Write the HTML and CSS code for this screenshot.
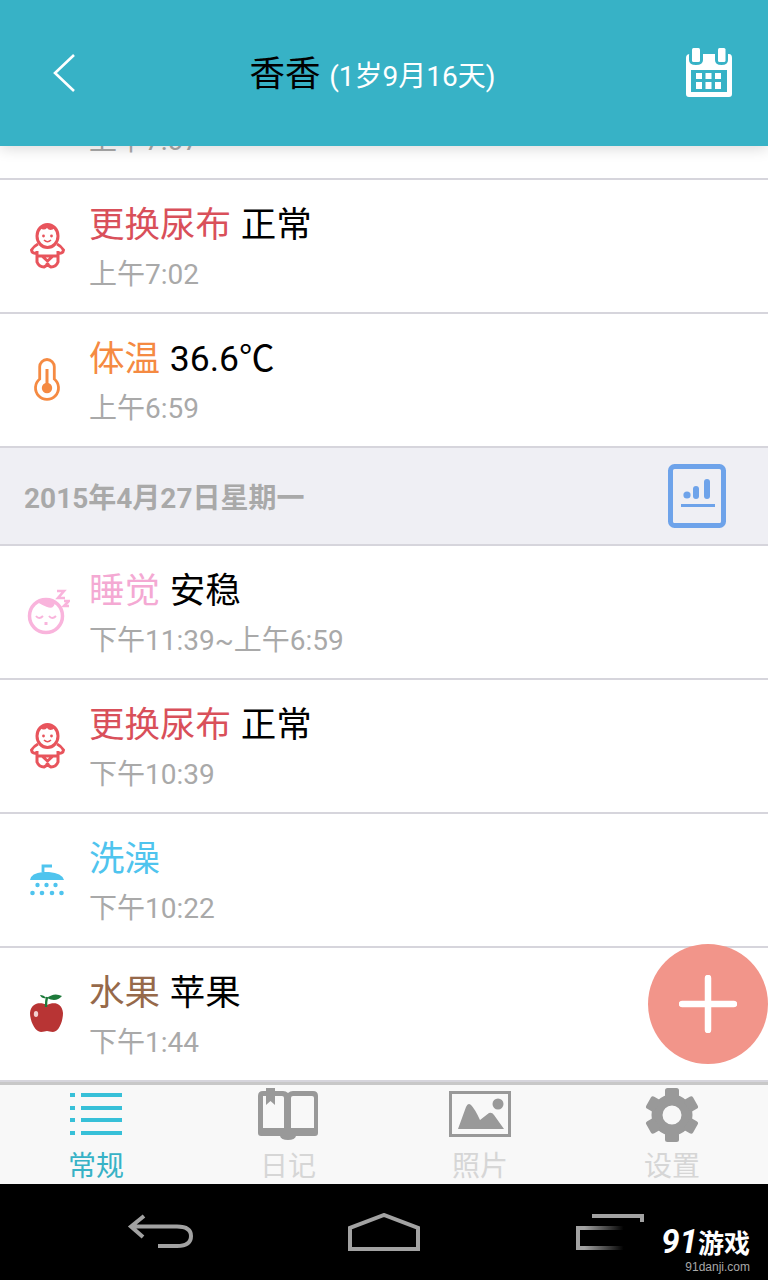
FILE: index.html
```html
<!DOCTYPE html>
<html>
<head>
  <meta name="viewport" content="width=device-width, initial-scale=1">
  <link rel="stylesheet" href="styles.css">
  <title>香香</title>
</head>
<body>

<div class="screen">
  <div class="topBar">
    <svg class="backIcon" viewBox="0 0 24 40" width="24" height="40"><path d="M22 2 L3 20 L22 38" fill="none" stroke="#fff" stroke-width="2.6"/></svg>
    <div class="topTitle">香香 <span class="topAge">(1岁9月16天)</span></div>
    <svg class="calendarIcon" viewBox="0 0 48 49" width="48" height="49">
      <path d="M5 6 H4 V12 Q4 17 11 17 Q18 17 18 12 V6 H30 V12 Q30 17 36.500 17 Q43 17 43 12 V6 H44 Q47 6 47 10 V46 Q47 49 44 49 H4 Q1 49 1 46 V10 Q1 6 5 6 Z" fill="#fff"/>
      <rect x="7" y="0" width="8" height="14" rx="1.500" fill="#fff"/>
      <rect x="33" y="0" width="7.500" height="14" rx="1.500" fill="#fff"/>
      <rect x="6" y="22" width="36" height="22" fill="#37b2c6"/>
      <g fill="#fff">
        <rect x="11" y="25" width="6" height="6"/><rect x="20.500" y="25" width="6" height="6"/><rect x="30" y="25" width="6" height="6"/>
        <rect x="11" y="34" width="6" height="7"/><rect x="20.500" y="34" width="6" height="7"/><rect x="30" y="34" width="6" height="7"/>
      </g>
    </svg>
  </div>

  <div class="listWrap">
    <div class="list">
      <div class="row">
        <div class="rowIcon"></div>
        <div class="rowText">
          <div class="rowTitle"><span class="red">更换尿布</span> 正常</div>
          <div class="rowTime">上午7:07</div>
        </div>
      </div>

      <div class="row">
        <div class="rowIcon">
          <svg viewBox="0 0 36 46" width="36" height="46"><use href="#baby"/></svg>
        </div>
        <div class="rowText">
          <div class="rowTitle"><span class="red">更换尿布</span> 正常</div>
          <div class="rowTime">上午7:02</div>
        </div>
      </div>

      <div class="row">
        <div class="rowIcon">
          <svg viewBox="0 0 28 44" width="28" height="44">
            <path d="M6.700 21 V8.800 A7.300 7.300 0 0 1 21.300 8.800 V21 A11.500 11.500 0 1 1 6.700 21 Z" fill="none" stroke="#f58a42" stroke-width="2.800"/>
            <rect x="12.500" y="11" width="3" height="18" fill="#f58a42"/>
            <circle cx="14" cy="30" r="5.200" fill="#f58a42"/>
          </svg>
        </div>
        <div class="rowText">
          <div class="rowTitle"><span class="orange">体温</span> 36.6℃</div>
          <div class="rowTime">上午6:59</div>
        </div>
      </div>

      <div class="dayRow">
        <div class="dayLabel">2015年4月27日星期一</div>
        <svg class="chartIcon" viewBox="0 0 58 64" width="58" height="64">
          <rect x="2.500" y="2.500" width="53" height="59" rx="4" fill="none" stroke="#6ea3ea" stroke-width="5"/>
          <circle cx="19" cy="31" r="3.600" fill="#6ea3ea"/>
          <rect x="25" y="22" width="6" height="13" rx="3" fill="#6ea3ea"/>
          <rect x="36" y="15" width="6" height="20" rx="3" fill="#6ea3ea"/>
          <rect x="13" y="40" width="34" height="3" fill="#6ea3ea"/>
        </svg>
      </div>

      <div class="row">
        <div class="rowIcon">
          <svg viewBox="0 0 46 46" width="46" height="46">
            <circle cx="22" cy="27" r="16.500" fill="none" stroke="#f9b4dc" stroke-width="3.500"/>
            <path d="M13 13 Q22 9 31 13 Q30 21 23 18 Q18 16 13 13 Z" fill="#f9b4dc"/>
            <path d="M12 27 Q15 31 19 27 M25 27 Q28 31 32 27" fill="none" stroke="#f9b4dc" stroke-width="2"/>
            <path d="M20.500 33 H23.500 V36 H20.500 Z" fill="#f9b4dc"/>
            <path d="M33 2 H40 L34 9 H41 M40 12 H45 L40 17 H45" fill="none" stroke="#f9b4dc" stroke-width="2.600"/>
          </svg>
        </div>
        <div class="rowText">
          <div class="rowTitle"><span class="pink">睡觉</span> 安稳</div>
          <div class="rowTime">下午11:39~上午6:59</div>
        </div>
      </div>

      <div class="row">
        <div class="rowIcon">
          <svg viewBox="0 0 36 46" width="36" height="46"><use href="#baby"/></svg>
        </div>
        <div class="rowText">
          <div class="rowTitle"><span class="red">更换尿布</span> 正常</div>
          <div class="rowTime">下午10:39</div>
        </div>
      </div>

      <div class="row">
        <div class="rowIcon">
          <svg viewBox="0 0 36 34" width="36" height="34">
            <path d="M14 9 V3 H23" fill="none" stroke="#4fc4ee" stroke-width="2.800"/>
            <path d="M1 17 Q2 10 14 9 H20 Q33 10 35 17 Z" fill="#4fc4ee"/>
            <g fill="#4fc4ee">
              <circle cx="8.500" cy="22" r="2.200"/><circle cx="17.500" cy="22" r="2.200"/><circle cx="26.500" cy="22" r="2.200"/>
              <circle cx="3.500" cy="30" r="2.300"/><circle cx="13" cy="30" r="2.300"/><circle cx="23" cy="30" r="2.300"/><circle cx="32.500" cy="30" r="2.300"/>
            </g>
          </svg>
        </div>
        <div class="rowText">
          <div class="rowTitle"><span class="blue">洗澡</span></div>
          <div class="rowTime">下午10:22</div>
        </div>
      </div>

      <div class="row">
        <div class="rowIcon">
          <svg viewBox="0 0 36 42" width="36" height="42">
            <path d="M18 12 C12 9 2 9 1 20 C1 28 6 39 12 39 C15 39 16 38 18 38 C20 38 21 39 24 39 C30 39 34 28 34 20 C33 9 24 9 18 12 Z" fill="#b83434"/>
            <path d="M17 14 Q17 8 18 4" fill="none" stroke="#1d7a3a" stroke-width="2.400"/>
            <path d="M18 5 Q25 -1 33 3 Q27 10 18 5 Z" fill="#1d7a3a"/>
            <path d="M11 2 Q15 2 17 5 Q13 6 11 2 Z" fill="#1d7a3a"/>
            <ellipse cx="7" cy="21" rx="2.200" ry="3" fill="#f2d0d0"/>
          </svg>
        </div>
        <div class="rowText">
          <div class="rowTitle"><span class="brown">水果</span> 苹果</div>
          <div class="rowTime">下午1:44</div>
        </div>
      </div>
    </div>

    <div class="addBtn">
      <svg viewBox="0 0 58 58" width="58" height="58"><path d="M29 3 V55 M3 29 H55" stroke="#fff" stroke-width="6.500" stroke-linecap="round"/></svg>
    </div>
  </div>

  <div class="tabBar">
    <div class="tab tabActive">
      <svg viewBox="0 0 52 54" width="52" height="54">
        <g fill="#37c0d8">
          <rect x="0" y="5" width="5" height="4"/><rect x="11" y="5" width="41" height="4"/>
          <rect x="0" y="18" width="5" height="4"/><rect x="11" y="18" width="41" height="4"/>
          <rect x="0" y="30" width="5" height="4"/><rect x="11" y="30" width="41" height="4"/>
          <rect x="0" y="43" width="5" height="4"/><rect x="11" y="43" width="41" height="4"/>
        </g>
      </svg>
      <span>常规</span>
    </div>
    <div class="tab">
      <svg viewBox="0 0 62 54" width="62" height="54">
        <path d="M6 3 H26 Q29 3 31 5 Q33 3 36 3 H56 Q61 3 61 8 V45 Q61 48 58 48 H39 Q38 52 31 52 Q24 52 23 48 H4 Q1 48 1 45 V8 Q1 3 6 3 Z" fill="#999"/>
        <path d="M6 8 H25 Q27 8 27 10 V40 H6 Z" fill="#f8f8f8"/>
        <path d="M34 40 V10 Q34 8 36 8 H55 Q57 8 57 10 V40 Z" fill="#f8f8f8"/>
        <path d="M9 0 H18 V17 L13.500 13 L9 17 Z" fill="#999"/>
      </svg>
      <span>日记</span>
    </div>
    <div class="tab">
      <svg viewBox="0 0 62 54" width="62" height="54">
        <rect x="1.500" y="4.500" width="59" height="43" fill="none" stroke="#999" stroke-width="3"/>
        <circle cx="49" cy="16" r="5.500" fill="#999"/>
        <path d="M9 41 L17 19 Q19 14 22 17 Q26 21 31 32 L40 25 Q43 24 45 27 L55 41 Z" fill="#999"/>
      </svg>
      <span>照片</span>
    </div>
    <div class="tab">
      <svg viewBox="0 0 54 54" width="54" height="54">
        <circle cx="27" cy="27" r="15" fill="none" stroke="#999" stroke-width="11"/>
        <g fill="#999">
          <rect x="20" y="0" width="14" height="10" rx="2.500"/>
          <rect x="20" y="44" width="14" height="10" rx="2.500"/>
          <rect x="20" y="0" width="14" height="10" rx="2.500" transform="rotate(60 27 27)"/>
          <rect x="20" y="0" width="14" height="10" rx="2.500" transform="rotate(120 27 27)"/>
          <rect x="20" y="0" width="14" height="10" rx="2.500" transform="rotate(240 27 27)"/>
          <rect x="20" y="0" width="14" height="10" rx="2.500" transform="rotate(300 27 27)"/>
        </g>
      </svg>
      <span>设置</span>
    </div>
  </div>

  <div class="navBar">
    <svg viewBox="0 0 68 36" width="68" height="36"><path d="M17 2 L4 12.500 L16 23 M4 12.500 H50 Q64 12.500 64 22 Q64 32 50 32 H31" fill="none" stroke="#a2a2a2" stroke-width="4"/></svg>
    <svg class="homeIcon" viewBox="0 0 72 38" width="72" height="38"><path d="M2 36 V15 L36 2 L70 15 V36 Z" fill="none" stroke="#a2a2a2" stroke-width="4"/></svg>
    <svg viewBox="0 0 68 36" width="68" height="36">
      <defs>
        <linearGradient id="fade" x1="0" x2="1" y1="0" y2="0">
          <stop offset="0.150" stop-color="#a2a2a2"/><stop offset="0.850" stop-color="#a2a2a2" stop-opacity="0"/>
        </linearGradient>
      </defs>
      <path d="M16 2 H66 V8" fill="none" stroke="#a2a2a2" stroke-width="4"/>
      <rect x="0" y="12" width="56" height="24" fill="url(#fade)"/>
      <rect x="4" y="16" width="54" height="16" fill="#000"/>
    </svg>
    <div class="watermark">
      <div class="wmLogo"><span class="wmNum">91</span>游戏</div>
      <div class="wmSite">91danji.com</div>
    </div>
  </div>
</div>

<svg class="defs" width="0" height="0">
  <symbol id="baby" viewBox="0 0 36 46">
    <g fill="none" stroke="#e8545c" stroke-width="3">
      <ellipse cx="18.500" cy="13" rx="10.500" ry="11.500"/>
      <path d="M9 21 Q5 23 2.500 27 Q3 31 8 30 M28 21 Q32 23 34.500 27 Q34 31 29 30"/>
      <path d="M8 28 V39 Q10 44 15 44 Q18 43 18.500 40 Q19 43 22 44 Q27 44 29 39 V28"/>
      <path d="M8 33 H29 M13 33 L18.500 38 L24 33"/>
    </g>
    <path d="M11 5 Q18 -1 26 5 Q21 9 18 5 Q15 8 11 5 Z" fill="#e8545c"/>
    <circle cx="14.500" cy="13" r="1.400" fill="#e8545c"/>
    <circle cx="22.500" cy="13" r="1.400" fill="#e8545c"/>
    <path d="M15 17 Q18.500 20.500 22 17" fill="none" stroke="#e8545c" stroke-width="1.600"/>
  </symbol>
</svg>

</body>
</html>
```
FILE: styles.css
```css
html, body {
  margin: 0;
  height: 100%;
}

body {
  font-family: Roboto, "Noto Sans CJK SC", sans-serif;
}

.defs {
  position: absolute;
}

.screen {
  width: 768px;
  height: 1280px;
  display: flex;
  flex-direction: column;
  overflow: hidden;
  background-color: #fff;
}

.topBar {
  position: relative;
  z-index: 2;
  height: 146px;
  flex: none;
  box-sizing: border-box;
  padding: 0 35px 0 52px;
  display: flex;
  align-items: center;
  justify-content: space-between;
  background-color: #37b2c6;
  box-shadow: 0 2px 14px rgba(0, 0, 0, 0.16);
}

.backIcon {
  margin-top: -1px;
}

.calendarIcon {
  margin-top: -1px;
}

.topTitle {
  margin-right: 16px;
  margin-top: 5px;
  line-height: 50px;
  font-size: 35.5px;
  white-space: nowrap;
  color: #000;
}

.topAge {
  font-size: 28px;
  color: #fff;
}

.listWrap {
  position: relative;
  flex: 1;
  min-height: 0;
  overflow: hidden;
}

.list {
  margin-top: -100px;
}

.row {
  height: 134px;
  box-sizing: border-box;
  display: flex;
  align-items: center;
  border-bottom: 2px solid #d6d5dc;
  background-color: #fff;
}

.rowIcon {
  width: 46px;
  margin: 0 19px 0 24px;
  display: flex;
  justify-content: center;
}

.rowText {
  flex: 1;
  padding-top: 7px;
}

.rowTitle {
  height: 50px;
  line-height: 50px;
  font-size: 35.5px;
  word-spacing: 1px;
  color: #000;
}

.rowTime {
  height: 50px;
  line-height: 50px;
  font-size: 28px;
  color: #a9a9a9;
}

.red { color: #d9505a; }
.orange { color: #f58a42; }
.pink { color: #f4a9d3; }
.blue { color: #4fc4ee; }
.brown { color: #96694a; }

.dayRow {
  height: 98px;
  box-sizing: border-box;
  padding: 0 42px 0 24px;
  display: flex;
  align-items: center;
  justify-content: space-between;
  background-color: #efeff4;
  border-bottom: 2px solid #d6d5dc;
}

.dayLabel {
  font-size: 28px;
  font-weight: bold;
  color: #a9a9a9;
}

.addBtn {
  position: absolute;
  right: 0;
  bottom: 18px;
  width: 120px;
  height: 120px;
  border-radius: 50%;
  background-color: #f2958a;
  display: flex;
  align-items: center;
  justify-content: center;
}

.tabBar {
  height: 102px;
  flex: none;
  box-sizing: border-box;
  display: grid;
  grid-template-columns: repeat(4, 192px);
  background-color: #f8f8f8;
  border-top: 3px solid #c8c8c8;
}

.tab {
  display: flex;
  flex-direction: column;
  align-items: center;
  height: 99px;
  padding-top: 3px;
  box-sizing: border-box;
  font-size: 28px;
  color: #d6d6d6;
}

.tab span {
  line-height: 30px;
  margin-top: 10px;
}

.tabActive {
  color: #37b2c6;
}

.navBar {
  position: relative;
  height: 96px;
  flex: none;
  box-sizing: border-box;
  padding: 0 124px 0 127px;
  display: flex;
  align-items: center;
  justify-content: space-between;
  background-color: #000;
}

.homeIcon {
  margin-left: -4px;
}

.watermark {
  position: absolute;
  right: 18px;
  bottom: 5px;
  text-align: right;
  color: #fff;
}

.wmLogo {
  font-size: 26px;
  font-weight: bold;
  line-height: 32px;
  white-space: nowrap;
}

.wmNum {
  font-size: 33px;
  font-style: italic;
}

.wmSite {
  font-family: "Liberation Sans", sans-serif;
  font-size: 12px;
  line-height: 15px;
  color: #a8a8a8;
}
```
